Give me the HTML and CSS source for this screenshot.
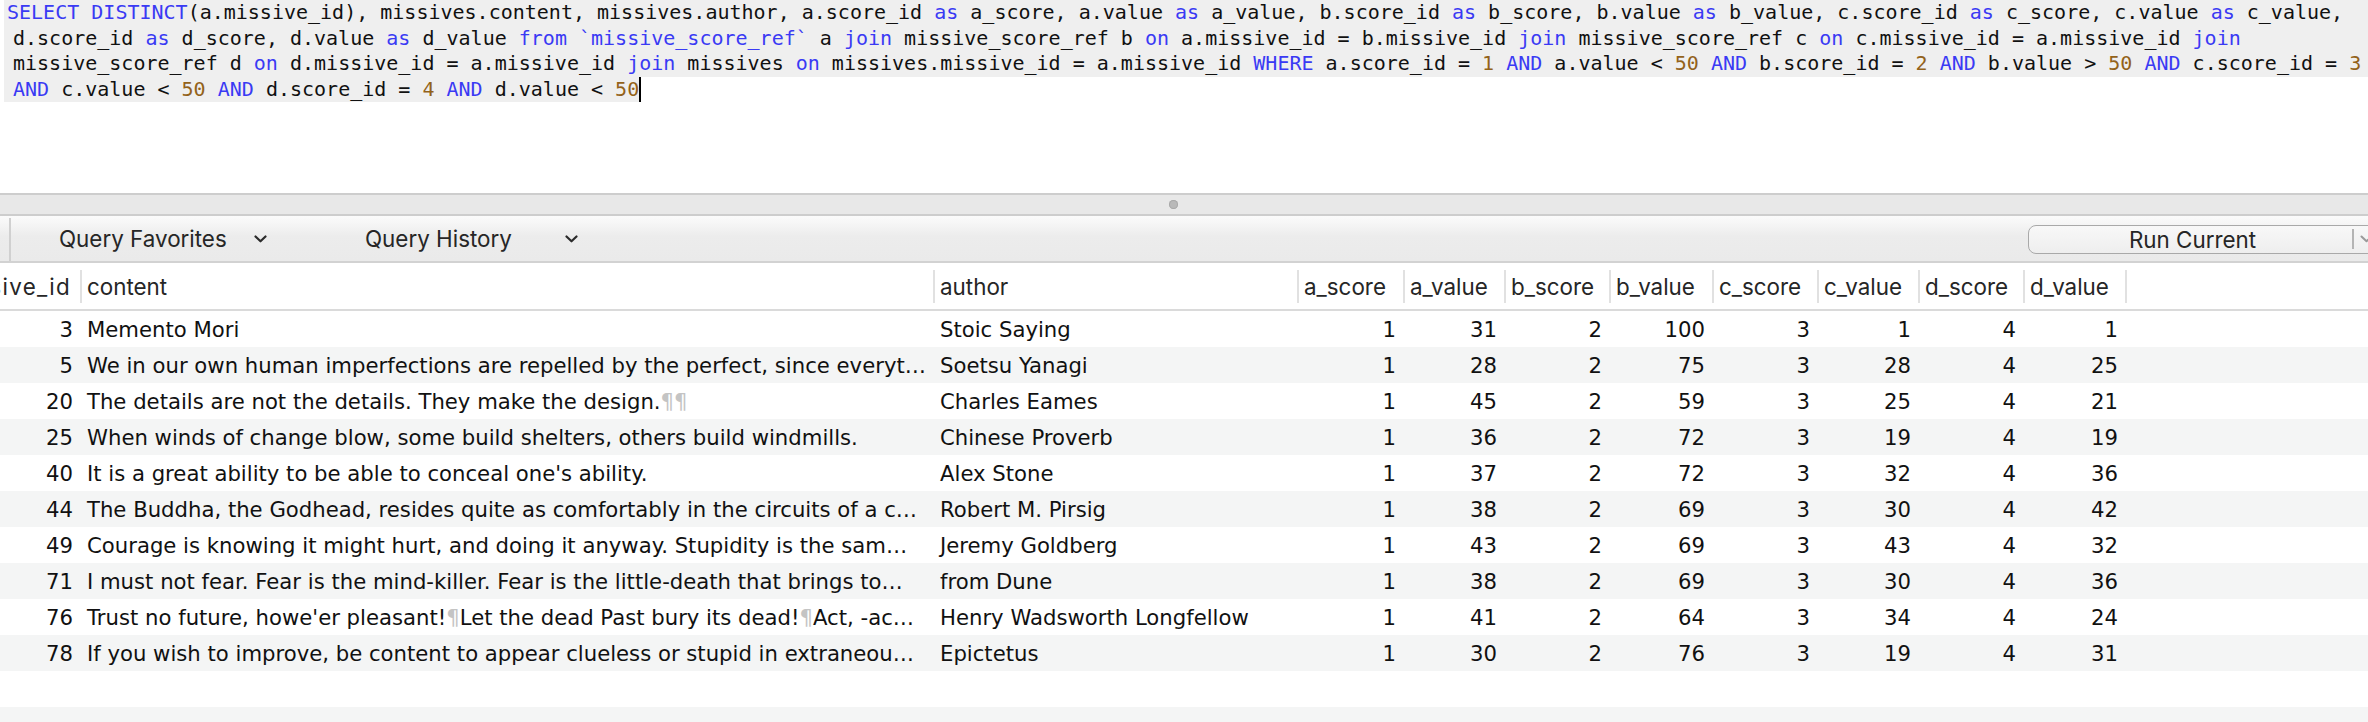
FILE: index.html
```html
<!DOCTYPE html>
<html>
<head>
<meta charset="utf-8">
<link rel="stylesheet" href="styles.css">
</head>
<body>
<div class="app">
  <div class="editor">
    <div class="sql">
      <div class="ln hl first-ln"><span class="kw">SELECT</span> <span class="kw">DISTINCT</span>(a.missive_id), missives.content, missives.author, a.score_id <span class="kw">as</span> a_score, a.value <span class="kw">as</span> a_value, b.score_id <span class="kw">as</span> b_score, b.value <span class="kw">as</span> b_value, c.score_id <span class="kw">as</span> c_score, c.value <span class="kw">as</span> c_value,</div>
      <div class="ln hl">d.score_id <span class="kw">as</span> d_score, d.value <span class="kw">as</span> d_value <span class="kw">from</span> <span class="kw">`missive_score_ref`</span> a <span class="kw">join</span> missive_score_ref b <span class="kw">on</span> a.missive_id = b.missive_id <span class="kw">join</span> missive_score_ref c <span class="kw">on</span> c.missive_id = a.missive_id <span class="kw">join</span></div>
      <div class="ln hl">missive_score_ref d <span class="kw">on</span> d.missive_id = a.missive_id <span class="kw">join</span> missives <span class="kw">on</span> missives.missive_id = a.missive_id <span class="kw">WHERE</span> a.score_id = <span class="num">1</span> <span class="kw">AND</span> a.value &lt; <span class="num">50</span> <span class="kw">AND</span> b.score_id = <span class="num">2</span> <span class="kw">AND</span> b.value &gt; <span class="num">50</span> <span class="kw">AND</span> c.score_id = <span class="num">3</span></div>
      <div class="ln last-ln"><span class="hl-inline"><span class="kw">AND</span> c.value &lt; <span class="num">50</span> <span class="kw">AND</span> d.score_id = <span class="num">4</span> <span class="kw">AND</span> d.value &lt; <span class="num">50</span></span><span class="caret"></span></div>
    </div>
  </div>

  <div class="splitter"><span class="grip"></span></div>

  <div class="toolbar">
    <div class="tb-lead"></div>
    <div class="popup popup-fav">
      <span class="popup-label">Query Favorites</span>
      <svg class="chev" width="13" height="8" viewBox="0 0 13 8"><path d="M1.5 1.5 L6.5 6.3 L11.5 1.5" fill="none" stroke="#2b2b2b" stroke-width="2.2" stroke-linecap="round" stroke-linejoin="round"/></svg>
    </div>
    <div class="popup popup-hist">
      <span class="popup-label">Query History</span>
      <svg class="chev" width="13" height="8" viewBox="0 0 13 8"><path d="M1.5 1.5 L6.5 6.3 L11.5 1.5" fill="none" stroke="#2b2b2b" stroke-width="2.2" stroke-linecap="round" stroke-linejoin="round"/></svg>
    </div>
    <div class="run-btn">
      <span class="run-label">Run Current</span>
      <span class="run-sep"></span>
      <svg class="chev run-chev" width="13" height="8" viewBox="0 0 13 8"><path d="M1.5 1.5 L6.5 6.3 L11.5 1.5" fill="none" stroke="#9a9a9a" stroke-width="2" stroke-linecap="round" stroke-linejoin="round"/></svg>
    </div>
  </div>

  <div class="grid">
    <div class="grid-inner">
      <div class="row head">
        <div class="hc num-col first">missive_id</div>
        <div class="hc">content</div>
        <div class="hc">author</div>
        <div class="hc">a_score</div>
        <div class="hc">a_value</div>
        <div class="hc">b_score</div>
        <div class="hc">b_value</div>
        <div class="hc">c_score</div>
        <div class="hc">c_value</div>
        <div class="hc">d_score</div>
        <div class="hc">d_value</div>
        <div class="hc-fill"></div>
      </div>

      <div class="row">
        <div class="c r">3</div><div class="c">Memento Mori</div><div class="c">Stoic Saying</div>
        <div class="c r">1</div><div class="c r">31</div><div class="c r">2</div><div class="c r">100</div><div class="c r">3</div><div class="c r">1</div><div class="c r">4</div><div class="c r">1</div><div></div>
      </div>
      <div class="row alt">
        <div class="c r">5</div><div class="c">We in our own human imperfections are repelled by the perfect, since everyt…</div><div class="c">Soetsu Yanagi</div>
        <div class="c r">1</div><div class="c r">28</div><div class="c r">2</div><div class="c r">75</div><div class="c r">3</div><div class="c r">28</div><div class="c r">4</div><div class="c r">25</div><div></div>
      </div>
      <div class="row">
        <div class="c r">20</div><div class="c">The details are not the details. They make the design.<span class="pil">¶¶</span></div><div class="c">Charles Eames</div>
        <div class="c r">1</div><div class="c r">45</div><div class="c r">2</div><div class="c r">59</div><div class="c r">3</div><div class="c r">25</div><div class="c r">4</div><div class="c r">21</div><div></div>
      </div>
      <div class="row alt">
        <div class="c r">25</div><div class="c">When winds of change blow, some build shelters, others build windmills.</div><div class="c">Chinese Proverb</div>
        <div class="c r">1</div><div class="c r">36</div><div class="c r">2</div><div class="c r">72</div><div class="c r">3</div><div class="c r">19</div><div class="c r">4</div><div class="c r">19</div><div></div>
      </div>
      <div class="row">
        <div class="c r">40</div><div class="c">It is a great ability to be able to conceal one's ability.</div><div class="c">Alex Stone</div>
        <div class="c r">1</div><div class="c r">37</div><div class="c r">2</div><div class="c r">72</div><div class="c r">3</div><div class="c r">32</div><div class="c r">4</div><div class="c r">36</div><div></div>
      </div>
      <div class="row alt">
        <div class="c r">44</div><div class="c">The Buddha, the Godhead, resides quite as comfortably in the circuits of a c…</div><div class="c">Robert M. Pirsig</div>
        <div class="c r">1</div><div class="c r">38</div><div class="c r">2</div><div class="c r">69</div><div class="c r">3</div><div class="c r">30</div><div class="c r">4</div><div class="c r">42</div><div></div>
      </div>
      <div class="row">
        <div class="c r">49</div><div class="c">Courage is knowing it might hurt, and doing it anyway. Stupidity is the sam…</div><div class="c">Jeremy Goldberg</div>
        <div class="c r">1</div><div class="c r">43</div><div class="c r">2</div><div class="c r">69</div><div class="c r">3</div><div class="c r">43</div><div class="c r">4</div><div class="c r">32</div><div></div>
      </div>
      <div class="row alt">
        <div class="c r">71</div><div class="c">I must not fear. Fear is the mind-killer. Fear is the little-death that brings to…</div><div class="c">from Dune</div>
        <div class="c r">1</div><div class="c r">38</div><div class="c r">2</div><div class="c r">69</div><div class="c r">3</div><div class="c r">30</div><div class="c r">4</div><div class="c r">36</div><div></div>
      </div>
      <div class="row">
        <div class="c r">76</div><div class="c">Trust no future, howe'er pleasant!<span class="pil">¶</span>Let the dead Past bury its dead!<span class="pil">¶</span>Act, -ac…</div><div class="c">Henry Wadsworth Longfellow</div>
        <div class="c r">1</div><div class="c r">41</div><div class="c r">2</div><div class="c r">64</div><div class="c r">3</div><div class="c r">34</div><div class="c r">4</div><div class="c r">24</div><div></div>
      </div>
      <div class="row alt">
        <div class="c r">78</div><div class="c">If you wish to improve, be content to appear clueless or stupid in extraneou…</div><div class="c">Epictetus</div>
        <div class="c r">1</div><div class="c r">30</div><div class="c r">2</div><div class="c r">76</div><div class="c r">3</div><div class="c r">19</div><div class="c r">4</div><div class="c r">31</div><div></div>
      </div>
      <div class="row empty"></div>
      <div class="row empty alt"></div>
    </div>
  </div>
</div>
</body>
</html>
```

FILE: styles.css
```css
* { box-sizing: border-box; }
html, body {
  margin: 0;
  padding: 0;
  background: #ffffff;
}
body {
  width: 2368px;
  height: 722px;
  overflow: hidden;
}
.app {
  display: flex;
  flex-direction: column;
  width: 2368px;
  height: 722px;
  overflow: hidden;
}

/* ---------- SQL editor ---------- */
.editor {
  height: 193px;
  flex: 0 0 193px;
  background: #ffffff;
  padding: 0 0 0 4px;
  overflow: hidden;
}
.sql {
  font-family: "DejaVu Sans Mono", "Liberation Mono", monospace;
  font-size: 20px;
  line-height: 25.5px;
  color: #111111;
}
.ln {
  height: 25.5px;
  white-space: pre;
  padding-left: 9px;
}
.ln.first-ln { padding-left: 3px; }
.ln.last-ln { padding-left: 0; }
.hl { background: #efefef; }
.hl-inline {
  background: #efefef;
  display: inline-block;
  height: 25.5px;
  padding-left: 9px;
}
.kw { color: #3a3af4; }
.num { color: #93621a; }
.caret {
  display: inline-block;
  width: 2px;
  height: 25px;
  background: #000;
  vertical-align: top;
}

/* ---------- splitter ---------- */
.splitter {
  flex: 0 0 23px;
  height: 23px;
  background: #e8e8e8;
  border-top: 2px solid #cdcdcd;
  border-bottom: 2px solid #cdcdcd;
  display: flex;
  align-items: center;
  justify-content: center;
  padding-right: 22px;
}
.grip {
  width: 9px;
  height: 9px;
  border-radius: 50%;
  background: #b9b9b9;
  box-shadow: inset 0 0 0 1px #a9a9a9;
}

/* ---------- toolbar ---------- */
.toolbar {
  flex: 0 0 47px;
  height: 47px;
  display: flex;
  align-items: center;
  background: linear-gradient(#fbfbfb 0%, #ececec 45%, #eaeaea 100%);
  border-bottom: 2px solid #d2d2d2;
  font-family: "Inter", "Roboto", "Liberation Sans", sans-serif;
  font-size: 22.4px;
  color: #262626;
  overflow: hidden;
}
.tb-lead {
  width: 11px;
  align-self: stretch;
  border-right: 2px solid #d0d0d0;
  margin-top: 2px;
}
.popup {
  display: flex;
  align-items: center;
  flex: 0 0 auto;
}
.popup-fav { width: 294px; padding-left: 48px; }
.popup-fav .popup-label { width: 195px; }
.popup-hist { width: 300px; padding-left: 60px; }
.popup-hist .popup-label { width: 200px; }
.chev { display: block; }

.run-btn {
  margin-left: auto;
  margin-right: -24px;
  flex: 0 0 364px;
  width: 364px;
  height: 29px;
  border: 1.5px solid #a9a9a9;
  border-radius: 8px;
  background: linear-gradient(#f8f8f8, #eeeeee);
  display: flex;
  align-items: center;
  margin-top: 1px;
}
.run-label {
  flex: 0 0 323px;
  text-align: center;
  padding-left: 4px;
}
.run-sep {
  width: 1.5px;
  height: 20px;
  background: #b4b4b4;
}
.run-chev { margin-left: 6px; }

/* ---------- result grid ---------- */
.grid {
  flex: 1 1 auto;
  overflow: hidden;
  background: #ffffff;
}
.grid-inner {
  margin-left: -48px;
  width: 2416px;
}
.row {
  display: grid;
  grid-template-columns: 130px 853px 364px 106px 101px 105px 103px 105px 101px 105px 102px 1fr;
  height: 36px;
  align-items: center;
  font-family: "DejaVu Sans", "Liberation Sans", sans-serif;
  font-size: 21.2px;
  color: #111111;
}
.row.alt { background: #f4f5f5; }
.row.head {
  height: 48px;
  border-bottom: 2px solid #dadada;
  font-family: "Inter", "Roboto", "Liberation Sans", sans-serif;
  font-size: 22.4px;
  color: #262626;
  align-items: stretch;
  background: #ffffff;
}
.hc {
  margin: 7px 0 6px;
  border-right: 2px solid #e1e1e1;
  padding-left: 5px;
  display: flex;
  align-items: center;
  white-space: nowrap;
  overflow: hidden;
}
.hc.first {
  justify-content: flex-end;
  padding-right: 9px;
  letter-spacing: 1.3px;
}
.c {
  white-space: nowrap;
  overflow: hidden;
  text-overflow: ellipsis;
  padding-left: 5px;
  padding-right: 9px;
}
.c.r { text-align: right; padding-right: 9px; }
.pil { color: #c4c4c4; }
```
